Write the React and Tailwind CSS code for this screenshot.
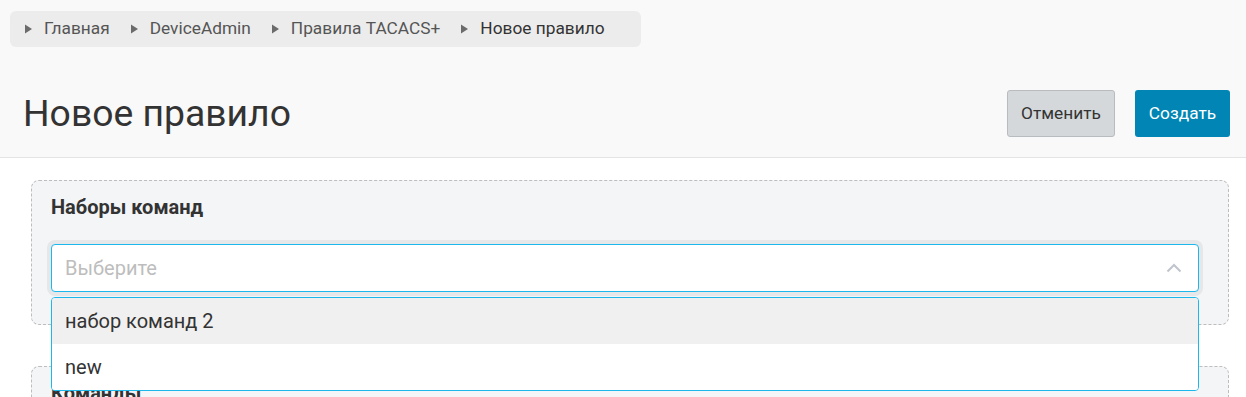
import { useState } from "react";

const crumbs = ["Главная", "DeviceAdmin", "Правила TACACS+", "Новое правило"];
const options = ["набор команд 2", "new"];

function Chevron() {
  return (
    <svg width="16" height="10" viewBox="0 0 16 10" fill="none">
      <path d="M1.5 8.5 8 2l6.5 6.5" stroke="#c0c4cc" strokeWidth="2" />
    </svg>
  );
}

function Caret() {
  return (
    <svg width="7" height="10" viewBox="0 0 7 10">
      <path d="M0 0.5 7 5 0 9.5Z" fill="#6b6b6b" />
    </svg>
  );
}

export default function App() {
  const [open] = useState(true);

  return (
    <div className="min-h-screen bg-white font-['Roboto',sans-serif] text-[#333]">
      {/* Header */}
      <div className="bg-[#f9f9f9] border-b border-[#e4e4e4] h-[158px] pt-[11px] px-[10px]">
        <div className="inline-flex items-center h-[36px] w-[631px] rounded-md bg-[#ececec] pl-[15px] gap-[21px]">
          {crumbs.map((c, i) => (
            <div key={c} className="flex items-center gap-[12px]">
              <Caret />
              <span
                className={`text-[17.3px] ${i === crumbs.length - 1 ? "text-[#333]" : "text-[#555]"}`}
              >
                {c}
              </span>
            </div>
          ))}
        </div>
        <div className="flex items-center justify-between mt-[43px] pl-[13px] pr-[6px]">
          <h1 className="text-[37.3px] leading-[47px] text-[#333]">Новое правило</h1>
          <div className="flex gap-[20px]">
            <button className="h-[47px] w-[108px] rounded-[3px] border border-[#b9bcbf] bg-[#d5d8db] text-[17.3px] text-[#333]">
              Отменить
            </button>
            <button className="h-[47px] w-[95px] rounded-[3px] bg-[#0085b4] text-[17.3px] text-white">
              Создать
            </button>
          </div>
        </div>
      </div>

      {/* Content */}
      <div className="pt-[22px] pl-[31px] pr-[17px]">
        <div className="relative rounded-lg border border-dashed border-[#bdbdbd] bg-[#f4f5f7] pt-[13px] pl-[19px] pr-[29px] pb-[32px]">
          <div className="text-[20px] font-bold text-[#333] leading-[26px]">Наборы команд</div>
          <div className="relative mt-[24px]">
            <div className="flex items-center justify-between h-[48px] rounded-[4px] border border-[#1cb8ec] bg-white pl-[13px] pr-[16px] shadow-[0_0_0_4px_#e6e7e9]">
              <span className="text-[20px] text-[#bdbdbd]">Выберите</span>
              <Chevron />
            </div>
            {open && (
              <div className="absolute left-0 right-0 top-[53px] z-10 rounded-[4px] border border-[#1cb8ec] bg-white overflow-hidden">
                {options.map((o, i) => (
                  <div
                    key={o}
                    className={`flex items-center h-[46px] pl-[13px] text-[20px] text-[#333] ${i === 0 ? "bg-[#f0f0f0]" : "bg-white"}`}
                  >
                    {o}
                  </div>
                ))}
              </div>
            )}
          </div>
        </div>

        <div className="mt-[41px] rounded-lg border border-dashed border-[#bdbdbd] bg-[#f4f5f7] pt-[13px] pl-[19px] pr-[29px] pb-[32px]">
          <div className="text-[20px] font-bold text-[#333] leading-[26px]">Команды</div>
          <div className="h-[48px] mt-[24px]" />
        </div>
      </div>
    </div>
  );
}
